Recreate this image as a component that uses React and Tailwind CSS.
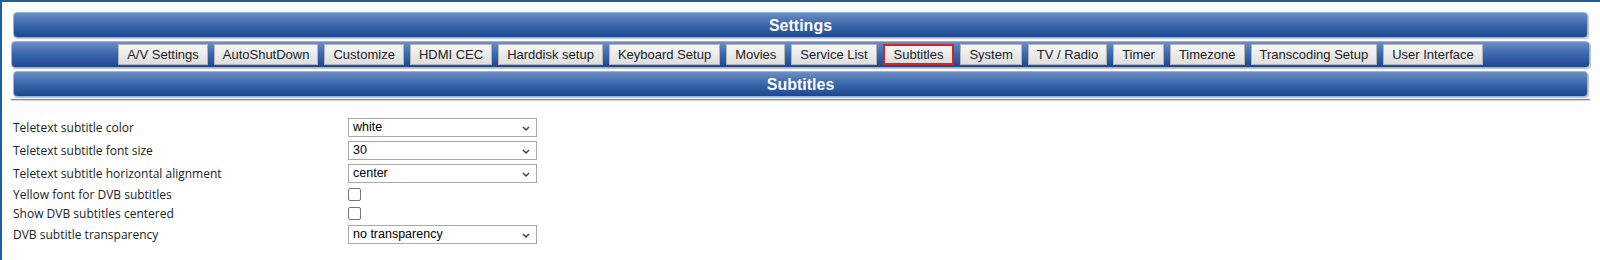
import React from "react";

const tabs = [
  "A/V Settings",
  "AutoShutDown",
  "Customize",
  "HDMI CEC",
  "Harddisk setup",
  "Keyboard Setup",
  "Movies",
  "Service List",
  "Subtitles",
  "System",
  "TV / Radio",
  "Timer",
  "Timezone",
  "Transcoding Setup",
  "User Interface",
];

const rows = [
  { label: "Teletext subtitle color", type: "select", value: "white" },
  { label: "Teletext subtitle font size", type: "select", value: "30" },
  { label: "Teletext subtitle horizontal alignment", type: "select", value: "center" },
  { label: "Yellow font for DVB subtitles", type: "check" },
  { label: "Show DVB subtitles centered", type: "check" },
  { label: "DVB subtitle transparency", type: "select", value: "no transparency" },
];

const HeaderBar = ({ title }) => (
  <div className="mx-[2px] h-[26px] rounded-[4px] border border-[#8db6e6] bg-linear-to-b from-[#6b8ec4] via-[#3a66ab] to-[#1c4891] flex items-center justify-center shadow-[1px_1px_1px_rgba(0,0,0,0.25)]">
    <span className="text-white font-bold text-[16px] leading-none pt-[2px] [font-family:'Liberation_Sans',Tahoma,sans-serif]">
      {title}
    </span>
  </div>
);

const Chevron = () => (
  <svg width="8" height="6" viewBox="0 0 8 6" className="absolute right-[6px] top-[7px]">
    <path d="M1 1 L4 4 L7 1" fill="none" stroke="#444" strokeWidth="1.5" />
  </svg>
);

export default function App() {
  return (
    <div className="w-full h-[260px] bg-white border-t-2 border-l-2 border-[#1f5e9f] overflow-hidden">
      <div className="pl-[9px] pr-[10px] pt-[10px]">
        <HeaderBar title="Settings" />

        {/* tab bar */}
        <div className="mt-[3px] h-[27px] rounded-[4px] border border-[#8db6e6] bg-linear-to-b from-[#6b8ec4] via-[#3a66ab] to-[#1c4891] flex items-center justify-center gap-[6px] shadow-[1px_1px_1px_rgba(0,0,0,0.25)]">
          {tabs.map((t) => (
            <button
              key={t}
              className={`h-[21px] bg-linear-to-b from-[#f7f7f7] to-[#dedede] text-[#222] text-[13px] leading-none [font-family:'Liberation_Sans',Arial,sans-serif] ${
                t === "Subtitles"
                  ? "border-2 border-[#e02020] px-[9px]"
                  : "border border-[#b5b5b5] px-[8px]"
              }`}
            >
              {t}
            </button>
          ))}
        </div>

        <div className="mt-[3px]">
          <HeaderBar title="Subtitles" />
        </div>

        <div className="mt-[2px] h-[2px] border-t border-[#888] bg-[#d8d8d8]" />

        {/* form */}
        <div className="pt-[15px] pl-[2px] text-[12px] text-[#222] [font-family:'Open_Sans',Tahoma,sans-serif]">
          {rows.map((r) => (
            <div
              key={r.label}
              className={`flex items-center ${r.type === "select" ? "h-[23px]" : "h-[19px]"}`}
            >
              <div className="w-[335px]">{r.label}</div>
              {r.type === "select" ? (
                <div className="relative w-[189px] h-[19px] border border-[#a9a9a9] bg-white flex items-center pl-[4px] text-[12.5px] text-black [font-family:'Liberation_Sans',Arial,sans-serif]">
                  {r.value}
                  <Chevron />
                </div>
              ) : (
                <div className="w-[13px] h-[13px] border border-[#767676] rounded-[2px] bg-white" />
              )}
            </div>
          ))}
        </div>
      </div>
    </div>
  );
}
